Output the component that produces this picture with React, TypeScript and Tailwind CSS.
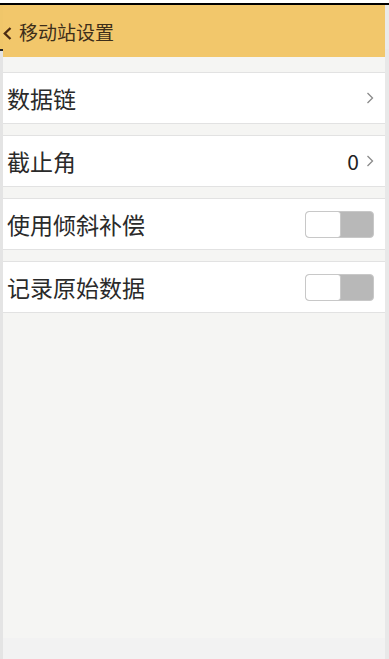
import React from "react";

const rows = [
  { label: "数据链", kind: "link" },
  { label: "截止角", kind: "link", value: "0" },
  { label: "使用倾斜补偿", kind: "toggle" },
  { label: "记录原始数据", kind: "toggle" },
];

function Chevron() {
  return (
    <svg width="8" height="12" viewBox="0 0 8 12" className="shrink-0">
      <polyline points="1.5,1 6.5,6 1.5,11" fill="none" stroke="#8a8a8a" strokeWidth="1.3" />
    </svg>
  );
}

function Toggle() {
  return (
    <div className="flex h-[27px] w-[69px] overflow-hidden rounded-[4px] border border-[#c8c8c8] bg-[#b8b8b8]">
      <div className="h-full w-[35px] rounded-[3px] border-r border-[#c8c8c8] bg-white" />
    </div>
  );
}

export default function App() {
  return (
    <div
      className="flex h-[659px] w-[389px] overflow-hidden bg-white"
      style={{ fontFamily: '"Noto Sans CJK SC", "Noto Sans", sans-serif' }}
    >
      <div className="flex w-[3px] shrink-0 flex-col">
        <div className="h-[3px] bg-white" />
        <div className="h-[2px] bg-black" />
        <div className="h-[44px] bg-[#f0c66a]" />
        <div className="h-[2px] bg-[#222]" />
        <div className="flex-1 bg-[#e4e4e4]" />
      </div>

      <div className="flex w-[382px] shrink-0 flex-col bg-[#f5f5f3]">
        <div className="h-[3px] bg-white" />
        <div className="h-[2px] bg-black" />
        <header className="flex h-[52px] items-center bg-[#f2c76b] text-[#3d2e1a]">
          <svg width="9" height="13" viewBox="0 0 9 13" className="mt-[4px] shrink-0">
            <polyline points="7.5,1 1.8,6.5 7.5,12" fill="none" stroke="#4a2a12" strokeWidth="2.3" />
          </svg>
          <span className="ml-[7px] text-[19px] leading-none">移动站设置</span>
        </header>

        <div className="mt-[15px] flex flex-col gap-[11px]">
          {rows.map((row) => (
            <div
              key={row.label}
              className="flex h-[52px] items-center justify-between border-y border-[#e2e2e2] bg-white pl-[4px] pr-[11px]"
            >
              <span className="text-[23px] leading-none text-[#2a2a2a]">{row.label}</span>
              {row.kind === "link" ? (
                <div className="flex items-center gap-[7px]">
                  {row.value && (
                    <span className="text-[21px] leading-none text-[#222]">{row.value}</span>
                  )}
                  <Chevron />
                </div>
              ) : (
                <Toggle />
              )}
            </div>
          ))}
        </div>

        <div className="flex-1" />
        <div className="h-[21px] bg-[#f2f2f2]" />
      </div>

      <div className="flex w-[4px] shrink-0 flex-col">
        <div className="h-[3px] bg-white" />
        <div className="h-[2px] bg-black" />
        <div className="h-[44px] bg-[#eaeaea]" />
        <div className="flex-1 bg-[#e8e8e8]" />
      </div>
    </div>
  );
}
